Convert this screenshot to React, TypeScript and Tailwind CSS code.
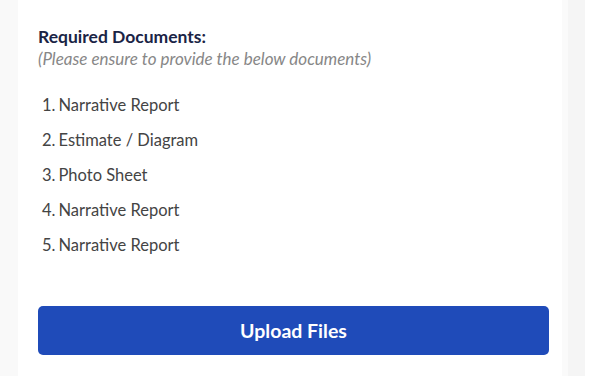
const documents = [
  "Narrative Report",
  "Estimate / Diagram",
  "Photo Sheet",
  "Narrative Report",
  "Narrative Report",
];

export default function App() {
  return (
    <div
      className="flex h-[376px] w-[604px] overflow-hidden bg-white"
      style={{ fontFamily: "Lato, 'Open Sans', sans-serif" }}
    >
      <div className="w-[18px] bg-[#f9f9f9]" />
      <div className="flex w-[544px] flex-col bg-white pl-5 pr-[13px] pt-[25px]">
        <h3 className="text-[17.5px] font-bold leading-[23px] text-[#1a2446]">
          Required Documents:
        </h3>
        <p className="text-[17px] italic leading-[22px] text-[#878787]">
          (Please ensure to provide the below documents)
        </p>
        <ol className="mt-[24px] flex flex-col gap-[13px] pl-1">
          {documents.map((doc, i) => (
            <li key={i} className="text-[16.5px] leading-[22px] text-[#444444]">
              {i + 1}.<span className="ml-[3px]">{doc}</span>
            </li>
          ))}
        </ol>
        <button className="mt-[50px] flex h-[49px] w-full items-center justify-center rounded-[5px] bg-[#1f4bb9] text-[19.5px] font-bold text-white">
          Upload Files
        </button>
      </div>
      <div className="w-[6px] bg-[#fafafa]" />
      <div className="w-[17px] bg-[#f5f5f5]" />
      <div className="flex-1 bg-white" />
    </div>
  );
}
